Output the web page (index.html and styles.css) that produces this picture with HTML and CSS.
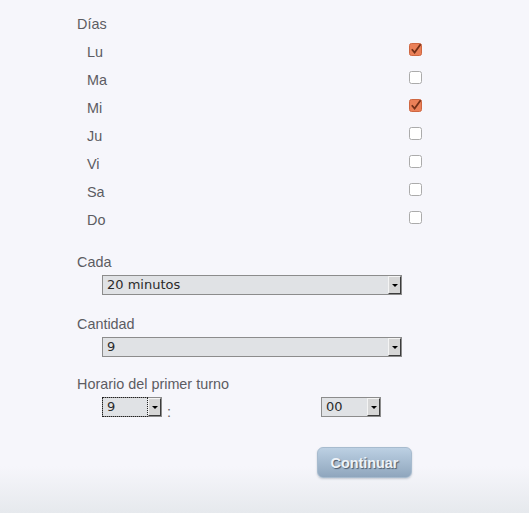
FILE: index.html
```html
<!DOCTYPE html>
<html lang="es">
<head>
<meta charset="utf-8">
<title>Turnos</title>
<link rel="stylesheet" href="styles.css">
</head>
<body>
<div class="form">
  <div class="heading">Días</div>
  <ul class="days">
    <li class="day"><span>Lu</span>
      <svg class="cb" viewBox="0 0 13 13" width="13" height="13"><rect x="0.5" y="0.5" width="12" height="12" rx="2" class="on"/><path d="M2.8 6.2 L5.6 9.6 L11.6 1.2" class="tick"/></svg></li>
    <li class="day"><span>Ma</span>
      <svg class="cb" viewBox="0 0 13 13" width="13" height="13"><rect x="0.5" y="0.5" width="12" height="12" rx="2" class="off"/></svg></li>
    <li class="day"><span>Mi</span>
      <svg class="cb" viewBox="0 0 13 13" width="13" height="13"><rect x="0.5" y="0.5" width="12" height="12" rx="2" class="on"/><path d="M2.8 6.2 L5.6 9.6 L11.6 1.2" class="tick"/></svg></li>
    <li class="day"><span>Ju</span>
      <svg class="cb" viewBox="0 0 13 13" width="13" height="13"><rect x="0.5" y="0.5" width="12" height="12" rx="2" class="off"/></svg></li>
    <li class="day"><span>Vi</span>
      <svg class="cb" viewBox="0 0 13 13" width="13" height="13"><rect x="0.5" y="0.5" width="12" height="12" rx="2" class="off"/></svg></li>
    <li class="day"><span>Sa</span>
      <svg class="cb" viewBox="0 0 13 13" width="13" height="13"><rect x="0.5" y="0.5" width="12" height="12" rx="2" class="off"/></svg></li>
    <li class="day"><span>Do</span>
      <svg class="cb" viewBox="0 0 13 13" width="13" height="13"><rect x="0.5" y="0.5" width="12" height="12" rx="2" class="off"/></svg></li>
  </ul>

  <div class="field f-cada">
    <div class="label">Cada</div>
    <div class="select wide"><span class="value">20 minutos</span><span class="arrow"><span class="tri"></span></span></div>
  </div>

  <div class="field f-cant">
    <div class="label">Cantidad</div>
    <div class="select wide"><span class="value">9</span><span class="arrow"><span class="tri"></span></span></div>
  </div>

  <div class="field f-hora">
    <div class="label">Horario del primer turno</div>
    <div class="time">
      <div class="select small focus"><span class="value">9</span><span class="arrow"><span class="tri"></span></span></div>
      <span class="colon">:</span>
      <div class="select small min"><span class="value">00</span><span class="arrow"><span class="tri"></span></span></div>
    </div>
  </div>

  <div class="actions"><button class="btn" type="button">Continuar</button></div>
</div>
</body>
</html>
```

FILE: styles.css
```css
html {
  height: 100%;
}
body {
  margin: 0;
  min-height: 100%;
  background: linear-gradient(to bottom, #f6f6fb 0, #f6f6fb 466px, #e6e9ed 513px);
  font-family: "Liberation Sans", Arial, sans-serif;
  font-size: 14.4px;
  color: #5c5c62;
}
.form {
  padding: 10px 0 0 77px;
}
.heading {
  line-height: 28px;
}
.days {
  list-style: none;
  margin: 0;
  padding: 0 0 0 10px;
  width: 335px;
}
.day {
  height: 28px;
  line-height: 28px;
  display: flex;
  justify-content: space-between;
  align-items: center;
}
.cb {
  display: block;
  margin-bottom: 6px;
}
.cb .on {
  fill: #ea8058;
  stroke: #cf6741;
}
.cb .off {
  fill: #ffffff;
  stroke: #ababab;
}
.cb .tick {
  fill: none;
  stroke: #743018;
  stroke-width: 1.8;
}
.label {
  line-height: 20px;
}
.f-cada { margin-top: 18px; }
.f-cant { margin-top: 19px; }
.f-hora { margin-top: 17px; }

.select {
  display: flex;
  box-sizing: border-box;
  height: 20px;
  margin-top: 3px;
  border: 1px solid #8c8c8c;
  background: #e0e2e5;
  font-family: "DejaVu Sans", sans-serif;
  font-size: 13px;
  color: #2b2b2b;
}
.select.wide {
  width: 300px;
  margin-left: 25px;
}
.select.small {
  width: 60px;
}
.value {
  flex: 1;
  padding-left: 4px;
  line-height: 18px;
}
.focus .value {
  outline: 1px dotted #222;
  outline-offset: 0;
}
.arrow {
  box-sizing: border-box;
  width: 13px;
  margin-left: 1px;
  border-left: 1px solid #f4f4f4;
  border-top: 1px solid #f4f4f4;
  border-right: 1px solid #3c3c3c;
  border-bottom: 1px solid #3c3c3c;
  background: #d6d6d6;
  display: flex;
  align-items: center;
  justify-content: center;
}
.tri {
  width: 0;
  height: 0;
  border-left: 3px solid transparent;
  border-right: 3px solid transparent;
  border-top: 3px solid #000;
}
.time {
  display: flex;
  margin-left: 25px;
  margin-top: 3px;
}
.time .select {
  margin-top: 0;
}
.colon {
  line-height: 20px;
  align-self: flex-end;
  margin: 0 0 -5px 5px;
  width: 10px;
  color: #666;
}
.select.min {
  margin-left: 144px;
}
.actions {
  margin: 30px 0 0 240px;
}
.btn {
  display: block;
  width: 95px;
  height: 31px;
  border: 1px solid #a7bbce;
  border-radius: 6px;
  background: linear-gradient(to bottom, #bcd0e3, #8fa6bd);
  box-shadow: 0 1px 2px rgba(60, 80, 100, 0.25);
  color: #eef3f8;
  font-family: "Liberation Sans", Arial, sans-serif;
  font-weight: bold;
  font-size: 14.4px;
  text-shadow: 1px 1px 1px #4c5b6b;
  padding: 0;
  cursor: pointer;
}
```
